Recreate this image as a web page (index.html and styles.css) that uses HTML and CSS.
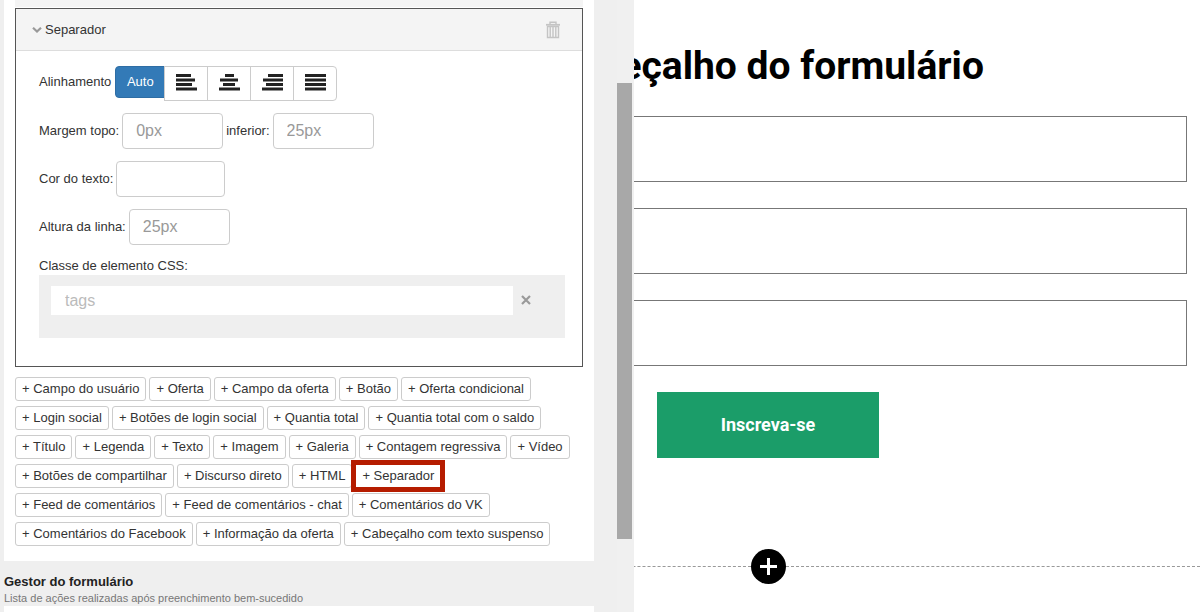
FILE: index.html
```html
<!DOCTYPE html>
<html lang="pt">
<head>
	<meta charset="UTF-8">
	<title>Formulário</title>
	<link rel="stylesheet" href="styles.css">
</head>
<body>
	<div class="page">
		<div class="editor">
			<div class="editor-content">
				<div class="panel">
					<div class="prev-item"></div>
					<div class="card">
						<div class="card-head">
							<button class="toggle" type="button">
								<svg width="10" height="7" viewBox="0 0 10 7"><path d="M1 1.7 5 5.5 9 1.7" fill="none" stroke="#999" stroke-width="2.2"/></svg>
								Separador
							</button>
							<button class="icon-btn" type="button" aria-label="Excluir">
								<svg width="16" height="18" viewBox="0 0 16 18" fill="none" stroke="#c4c4c4">
									<path d="M5 3V1.2h6V3" stroke-width="1.4"/>
									<path d="M1 3.8h14" stroke-width="1.8"/>
									<path d="M2.5 5.5h11v11h-11zM5.2 6v10M8 6v10M10.8 6v10" stroke-width="1.4"/>
								</svg>
							</button>
						</div>
						<div class="card-body">
							<div class="row align-row">
								<span>Alinhamento</span>
								<div class="btn-group">
									<button class="active" type="button">Auto</button>
									<button type="button" aria-label="Esquerda"><svg width="22" height="17" viewBox="0 0 22 17"><path d="M1 1.5h15M1 6h19M1 10.5h16M1 15h21" /></svg></button>
									<button type="button" aria-label="Centro"><svg width="22" height="17" viewBox="0 0 22 17"><path d="M7 1.5h9M2 6h18M5 10.5h12M1 15h21" /></svg></button>
									<button type="button" aria-label="Direita"><svg width="22" height="17" viewBox="0 0 22 17"><path d="M7 1.5h15M2 6h20M5 10.5h17M1 15h21" /></svg></button>
									<button type="button" aria-label="Justificar"><svg width="22" height="17" viewBox="0 0 22 17"><path d="M1 1.5h21M1 6h21M1 10.5h21M1 15h21" /></svg></button>
								</div>
							</div>
							<div class="row">
								<label for="top">Margem topo:</label>
								<input class="field" id="top" type="text" placeholder="0px">
								<label for="bottom">inferior:</label>
								<input class="field" id="bottom" type="text" placeholder="25px">
							</div>
							<div class="row">
								<label for="color">Cor do texto:</label>
								<input class="field wide" id="color" type="text">
							</div>
							<div class="row">
								<label for="height">Altura da linha:</label>
								<input class="field" id="height" type="text" placeholder="25px">
							</div>
							<label class="css-label" for="tags">Classe de elemento CSS:</label>
							<div class="tags">
								<input id="tags" type="text" placeholder="tags">
								<button class="icon-btn" type="button" aria-label="Limpar">
									<svg width="10" height="10" viewBox="0 0 10 10"><path d="M1 1l8 8M9 1L1 9" stroke="#999" stroke-width="2.2"/></svg>
								</button>
							</div>
						</div>
					</div>
					<div class="chips">
						<button type="button">+ Campo do usuário</button>
						<button type="button">+ Oferta</button>
						<button type="button">+ Campo da oferta</button>
						<button type="button">+ Botão</button>
						<button type="button">+ Oferta condicional</button>
						<button type="button">+ Login social</button>
						<button type="button">+ Botões de login social</button>
						<button type="button">+ Quantia total</button>
						<button type="button">+ Quantia total com o saldo</button>
						<button type="button">+ Título</button>
						<button type="button">+ Legenda</button>
						<button type="button">+ Texto</button>
						<button type="button">+ Imagem</button>
						<button type="button">+ Galeria</button>
						<button type="button">+ Contagem regressiva</button>
						<button type="button">+ Vídeo</button>
						<button type="button">+ Botões de compartilhar</button>
						<button type="button">+ Discurso direto</button>
						<button type="button">+ HTML</button>
						<button class="marked" type="button">+ Separador</button>
						<button type="button">+ Feed de comentários</button>
						<button type="button">+ Feed de comentários - chat</button>
						<button type="button">+ Comentários do VK</button>
						<button type="button">+ Comentários do Facebook</button>
						<button type="button">+ Informação da oferta</button>
						<button type="button">+ Cabeçalho com texto suspenso</button>
					</div>
				</div>
				<h2>Gestor do formulário</h2>
				<p class="hint">Lista de ações realizadas após preenchimento bem-sucedido</p>
				<div class="panel next-panel"></div>
			</div>
			<div class="scrollbar"><div class="thumb"></div></div>
		</div>

		<div class="preview">
			<form class="form">
				<h1>Cabeçalho do formulário</h1>
				<input type="text" aria-label="Campo 1">
				<input type="text" aria-label="Campo 2">
				<input type="text" aria-label="Campo 3">
				<button type="button">Inscreva-se</button>
			</form>
			<div class="add-line">
				<button type="button" aria-label="Adicionar bloco">
					<svg width="17" height="17" viewBox="0 0 17 17"><path d="M8.5 0v17M0 8.5h17" stroke="#fff" stroke-width="3"/></svg>
				</button>
			</div>
		</div>
	</div>
</body>
</html>
```
FILE: styles.css
```css
* {
	margin: 0;
	padding: 0;
	box-sizing: border-box;
}
body {
	font: 13px/18px "Liberation Sans", Arial, sans-serif;
	color: #333;
	background: #fff;
}
button, input {
	font: inherit;
	color: inherit;
}
button {
	background: none;
	border: 0;
	cursor: pointer;
}
svg {
	display: block;
}

/* the editor covers the left part of the preview */
.page {
	display: grid;
	grid-template-columns: 336px 298px 1fr;
	grid-template-rows: 100vh;
	overflow: hidden;
}
.editor {
	grid-area: 1 / 1 / 2 / 3;
	z-index: 1;
	display: flex;
	overflow: hidden;
	padding-left: 4px;
	background: #efefef;
}
.editor-content {
	flex: 1;
	margin-right: 23px;
}
.panel {
	padding: 0 11px 15px;
	background: #fff;
}
.prev-item {
	height: 7px;
	margin-bottom: 1px;
	background: #f4f4f4;
}
.scrollbar {
	width: 17px;
	padding: 83px 2px 0 0;
	background: #f0f0f0;
}
.thumb {
	height: 456px;
	background: #a8a8a8;
}

.card {
	border: 1px solid #555;
}
.card-head {
	display: flex;
	align-items: center;
	justify-content: space-between;
	height: 42px;
	padding: 0 21px 0 16px;
	background: #f4f4f4;
	border-bottom: 1px solid #ddd;
}
.toggle {
	display: flex;
	align-items: center;
	gap: 3px;
}
.card-body {
	padding: 15px 17px 28px 23px;
}
.row {
	display: flex;
	align-items: center;
	gap: 3px;
	margin-bottom: 12px;
}
.align-row {
	align-items: flex-start;
	gap: 4px;
	line-height: 32px;
}
.btn-group {
	display: flex;
	align-items: flex-start;
}
.btn-group button {
	display: flex;
	align-items: center;
	justify-content: center;
	width: 44px;
	height: 35px;
	margin-left: -1px;
	padding-bottom: 2px;
	border: 1px solid #ccc;
}
.btn-group .active {
	width: 50px;
	height: 32px;
	margin-left: 0;
	padding-bottom: 0;
	color: #fff;
	background: #337ab7;
	border-color: #2e6da4;
	border-radius: 4px 0 0 4px;
}
.btn-group button:last-child {
	border-radius: 0 4px 4px 0;
}
.btn-group path {
	stroke: #222;
	stroke-width: 3;
}
.field {
	width: 101px;
	height: 36px;
	padding: 0 13px;
	font-size: 16px;
	border: 1px solid #ccc;
	border-radius: 4px;
}
.wide {
	width: 109px;
}
::placeholder {
	color: #999;
	opacity: 1;
}
.css-label {
	display: block;
}
.tags {
	display: flex;
	align-items: flex-start;
	gap: 8px;
	height: 63px;
	padding: 11px 34px 0 12px;
	background: #efefef;
}
.tags input {
	flex: 1;
	height: 29px;
	padding: 0 14px;
	font-size: 16px;
	background: #fff;
	border: 0;
}
.tags ::placeholder {
	color: #bbb;
}
.tags .icon-btn {
	padding: 9px 0;
}

.chips {
	display: flex;
	flex-wrap: wrap;
	gap: 5px 3px;
	margin-top: 10px;
}
.chips button {
	height: 24px;
	padding: 0 6px;
	border: 1px solid #ccc;
	border-radius: 3px;
}
.chips .marked {
	border-radius: 0;
	outline: 5px solid #b51c00;
	outline-offset: -1px;
}

h2 {
	margin-top: 12px;
	font-size: 13px;
	line-height: 18px;
	color: #222;
}
.hint {
	font-size: 11px;
	line-height: 15px;
	color: #777;
}
.next-panel {
	height: 40px;
}

.preview {
	grid-area: 1 / 2 / 2 / 4;
	font-family: Roboto, sans-serif;
}
.form {
	display: flex;
	flex-direction: column;
	align-items: center;
	gap: 26px;
	padding: 42px 13px 0;
}
h1 {
	font-size: 39px;
	line-height: 48px;
	color: #000;
}
.form input {
	width: 100%;
	height: 66px;
	padding: 0 16px;
	border: 1px solid #777;
}
.form button {
	width: 222px;
	height: 66px;
	font-size: 18px;
	font-weight: 700;
	color: #fff;
	background: #1b9d69;
}
.add-line {
	display: flex;
	align-items: center;
	justify-content: center;
	margin-top: 91px;
}
.add-line::before, .add-line::after {
	content: "";
	flex: 1;
	border-top: 1px dashed #999;
}
.add-line button {
	display: flex;
	align-items: center;
	justify-content: center;
	width: 35px;
	height: 35px;
	background: #000;
	border-radius: 50%;
}
```
